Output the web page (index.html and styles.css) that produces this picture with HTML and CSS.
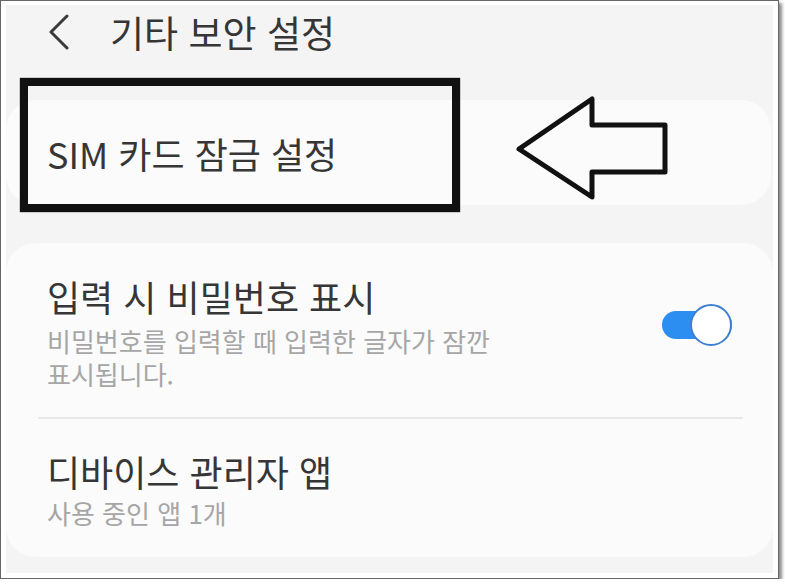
FILE: index.html
```html
<!DOCTYPE html>
<html lang="ko">
<head>
    <meta charset="UTF-8">
    <title>기타 보안 설정</title>
    <link rel="stylesheet" href="styles.css">
</head>
<body>

<div class="shot">
    <div class="screen">
        <!-- Top bar -->
        <div class="topbar">
            <svg class="back" width="22" height="36" viewBox="0 0 22 36">
                <polyline points="19,2 3,18 19,34" fill="none" stroke="#3a3a3a" stroke-width="3" stroke-linecap="round" stroke-linejoin="round"/>
            </svg>
            <div class="title">기타 보안 설정</div>
        </div>

        <!-- SIM card -->
        <div class="card card-sim">
            <div class="item-title">SIM 카드 잠금 설정</div>
        </div>

        <!-- Other options -->
        <div class="card card-list">
            <div class="row row-first">
                <div class="row-text">
                    <div class="item-title">입력 시 비밀번호 표시</div>
                    <div class="item-sub">비밀번호를 입력할 때 입력한 글자가 잠깐<br>표시됩니다.</div>
                </div>
                <div class="switch"><div class="knob"></div></div>
            </div>
            <div class="divider"></div>
            <div class="row row-last">
                <div class="row-text">
                    <div class="item-title">디바이스 관리자 앱</div>
                    <div class="item-sub">사용 중인 앱 1개</div>
                </div>
            </div>
        </div>

        <!-- Annotation -->
        <div class="mark-box"></div>
        <svg class="mark-arrow" width="180" height="120" viewBox="0 0 180 120">
            <polygon points="10,55 83,5 83,31 156,31 156,78 83,78 83,103" fill="none" stroke="#111" stroke-width="5" stroke-linejoin="round"/>
        </svg>
    </div>
</div>

</body>
</html>
```

FILE: styles.css
```css
* {
    margin: 0;
    padding: 0;
    box-sizing: border-box;
}
body {
    background: #fff;
    font-family: "Noto Sans CJK KR", "Noto Sans", sans-serif;
}
/* Framed screenshot */
.shot {
    width: 779px;
    height: 579px;
    border: 1px solid #666;
    padding: 4px 5px 5px 5px;
    background: #fff;
    box-shadow: 3px 3px 3px rgba(0, 0, 0, 0.45);
}
.screen {
    position: relative;
    height: 100%;
    background: #f4f4f4;
    overflow: hidden;
}
/* Top bar */
.topbar {
    display: flex;
    align-items: center;
    height: 54px;
    padding-left: 42px;
}
.back {
    margin-right: 40px;
}
.title {
    font-size: 37px;
    color: #363636;
    line-height: 46px;
}
/* Cards */
.card {
    background: #fbfbfb;
    border-radius: 30px;
}
.card-sim {
    margin: 41px 2px 0 0;
    height: 105px;
    display: flex;
    align-items: center;
    padding-left: 41px;
}
.card-list {
    margin-top: 38px;
    height: 314px;
}
.item-title {
    font-size: 36px;
    line-height: 44px;
    color: #363636;
}
.item-sub {
    font-size: 26px;
    line-height: 33px;
    color: #a6a6a6;
}
.row {
    display: flex;
    align-items: center;
    justify-content: space-between;
    padding: 0 41px;
}
.row-first {
    padding-top: 31px;
    padding-bottom: 27px;
}
.row-first .item-sub {
    margin-top: 6px;
}
.row-last {
    padding-top: 30px;
}
.row-last .item-sub {
    margin-top: 3px;
}
.divider {
    height: 2px;
    background: #e8e8e8;
    margin: 0 30px 0 32px;
}
/* Toggle */
.switch {
    position: relative;
    width: 70px;
    height: 28px;
    margin-top: -14px;
    border-radius: 14px;
    background: #2b8ef0;
}
.knob {
    position: absolute;
    right: 0;
    top: -7px;
    width: 42px;
    height: 42px;
    border-radius: 50%;
    background: #fff;
    border: 2px solid #3f7fd0;
}
/* Annotation overlay */
.mark-box {
    position: absolute;
    left: 14px;
    top: 73px;
    width: 440px;
    height: 134px;
    border: 8px solid #111;
    box-shadow: 0 0 1px #000;
}
.mark-arrow {
    position: absolute;
    left: 503px;
    top: 89px;
}
```
